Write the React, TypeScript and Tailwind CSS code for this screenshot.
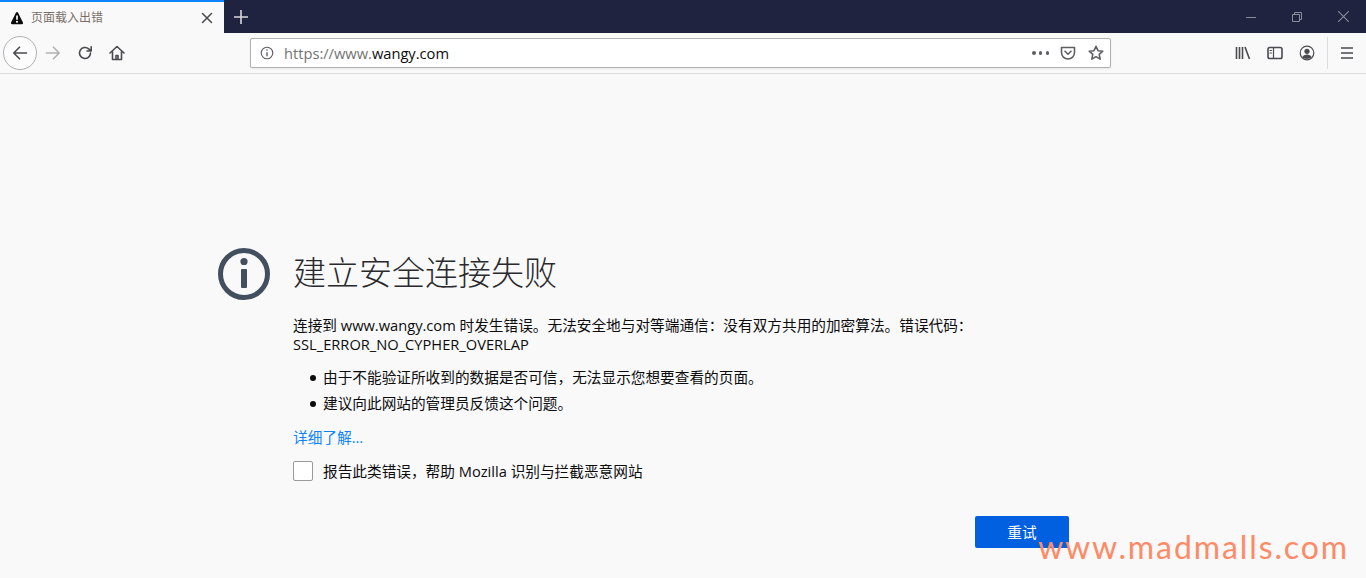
import React from "react";

const cjk = { fontFamily: '"Open Sans", "Noto Sans CJK SC", sans-serif' };

function Icon({ children, className = "" }: { children: React.ReactNode; className?: string }) {
  return (
    <svg viewBox="0 0 16 16" className={className} fill="none" stroke="currentColor" strokeWidth="1.6" strokeLinecap="round" strokeLinejoin="round">
      {children}
    </svg>
  );
}

function TabBar() {
  return (
    <div className="flex h-[33px] bg-[#202340]">
      <div className="flex h-[33px] w-[224px] items-center border-t-2 border-[#0a84ff] bg-[#f9f9fa] pl-[10px] pr-[10px]">
        <svg viewBox="0 0 16 16" className="h-[14px] w-[14px] text-[#0c0c0d]" fill="currentColor">
          <path d="M8 1c-.5 0-.9.3-1.1.7L1.2 13c-.5 1 .2 2 1.2 2h11.2c1 0 1.7-1 1.2-2L9.1 1.7C8.9 1.3 8.5 1 8 1zM7 5h2v5H7V5zm1 6.2a1.2 1.2 0 110 2.4 1.2 1.2 0 010-2.4z" fillRule="evenodd" />
        </svg>
        <span className="ml-[7px] flex-1 text-[12px] text-[#7a6f68]">页面载入出错</span>
        <svg viewBox="0 0 12 12" className="mr-[1px] h-[12px] w-[12px] text-[#4a4a4f]" stroke="currentColor" strokeWidth="1.5" strokeLinecap="round">
          <path d="M1.5 1.5l9 9M10.5 1.5l-9 9" />
        </svg>
      </div>
      <div className="flex w-[34px] items-center justify-center text-[#d7d7db]">
        <svg viewBox="0 0 14 14" className="h-[14px] w-[14px]" stroke="currentColor" strokeWidth="1.6">
          <path d="M7 0v14M0 7h14" />
        </svg>
      </div>
      <div className="flex-1" />
      <div className="flex items-center text-[#8a8c9c]">
        <div className="flex w-[46px] justify-center">
          <svg viewBox="0 0 10 10" className="h-[10px] w-[10px]" stroke="currentColor" strokeWidth="1"><path d="M0 5.5h10" /></svg>
        </div>
        <div className="flex w-[46px] justify-center">
          <svg viewBox="0 0 10 10" className="h-[10px] w-[10px]" fill="none" stroke="currentColor" strokeWidth="1"><path d="M.5 2.5h7v7h-7zM2.5 2.5V.5h7v7h-2" /></svg>
        </div>
        <div className="flex w-[46px] justify-center">
          <svg viewBox="0 0 10 10" className="h-[11px] w-[11px]" stroke="currentColor" strokeWidth="1"><path d="M0 0l10 10M10 0L0 10" /></svg>
        </div>
      </div>
    </div>
  );
}

function Toolbar() {
  return (
    <div className="flex h-[41px] items-center border-b border-[#dcdcde] bg-[#f9f9fa] text-[#4a4a4f]">
      <div className="ml-[3px] flex h-[34px] w-[34px] items-center justify-center rounded-full border border-[#b1b1b3] bg-[#fcfcfc]">
        <Icon className="h-[16px] w-[16px]"><path d="M14.5 8H2M7.5 2.2L1.8 8l5.7 5.8" /></Icon>
      </div>
      <div className="ml-[8px] flex w-[16px] justify-center text-[#b1b1b3]">
        <Icon className="h-[16px] w-[16px]"><path d="M1.5 8H14M8.5 2.2L14.2 8l-5.7 5.8" /></Icon>
      </div>
      <div className="ml-[16px] flex w-[16px] justify-center">
        <Icon className="h-[16px] w-[16px]"><path d="M13.5 8a5.5 5.5 0 11-1.8-4.1L14 6M14.2 1.8V6H10" /></Icon>
      </div>
      <div className="ml-[16px] flex w-[16px] justify-center">
        <Icon className="h-[16px] w-[16px]"><path d="M1 8l7-6.5L15 8M3.5 6.5V14.5h9V6.5M7 14.5v-4h2v4" /></Icon>
      </div>
      <div className="ml-[125px] flex h-[30px] w-[861px] items-center rounded-[2px] border border-[#b1b1b3] bg-white pl-[9px] pr-[6px] shadow-[0_1px_2px_rgba(0,0,0,0.08)]">
        <svg viewBox="0 0 16 16" className="h-[14px] w-[14px] text-[#5f5f63]" fill="none" stroke="currentColor" strokeWidth="1.3">
          <circle cx="8" cy="8" r="6.6" />
          <path d="M8 7v4.6" strokeWidth="1.6" />
          <circle cx="8" cy="4.7" r="0.9" fill="currentColor" stroke="none" />
        </svg>
        <div className="ml-[10px] flex-1 text-[14.67px] leading-none" style={{ fontFamily: '"Open Sans", sans-serif' }}>
          <span className="text-[#737373]">https://www.</span><span className="text-[#0c0c0d]">wangy.com</span>
        </div>
        <div className="flex w-[17px] justify-between">
          <span className="h-[3.5px] w-[3.5px] rounded-full bg-[#5f5f63]" />
          <span className="h-[3.5px] w-[3.5px] rounded-full bg-[#5f5f63]" />
          <span className="h-[3.5px] w-[3.5px] rounded-full bg-[#5f5f63]" />
        </div>
        <Icon className="ml-[11px] h-[16px] w-[16px] text-[#5f5f63]"><path d="M1.5 2.5h13v5a6.5 6.5 0 01-13 0zM5 6.2l3 3 3-3" /></Icon>
        <Icon className="ml-[12px] h-[16px] w-[16px] text-[#5f5f63]"><path d="M8 1.3l2 4.4 4.8.5-3.6 3.2 1 4.7L8 11.6l-4.2 2.5 1-4.7L1.2 6.2 6 5.7z" /></Icon>
      </div>
      <div className="flex-1" />
      <svg viewBox="0 0 16 16" className="h-[16px] w-[16px]" fill="none" stroke="currentColor" strokeWidth="1.6">
        <path d="M1.5 2v12M4.5 2v12M7.5 2v12M10 2l4.5 12" />
      </svg>
      <Icon className="ml-[16px] h-[16px] w-[16px]"><rect x="1" y="2.5" width="14" height="11" rx="1.8" /><path d="M6.5 2.5v11M3 5.5h1.5M3 8h1.5" strokeWidth="1.2" /></Icon>
      <svg viewBox="0 0 16 16" className="ml-[16px] h-[16px] w-[16px]" fill="none" stroke="currentColor" strokeWidth="1.2">
        <circle cx="8" cy="8" r="6.8" />
        <circle cx="8" cy="6.3" r="2.6" fill="currentColor" stroke="none" />
        <path d="M3.2 12.3c1-2 2.8-2.8 4.8-2.8s3.8.8 4.8 2.8c-1.4 1.2-3 1.6-4.8 1.6s-3.4-.4-4.8-1.6z" fill="currentColor" stroke="none" />
      </svg>
      <div className="ml-[12px] h-[32px] w-px bg-[#dcdcde]" />
      <svg viewBox="0 0 14 14" className="ml-[12px] mr-[12px] h-[14px] w-[14px]" stroke="currentColor" strokeWidth="1.7">
        <path d="M1 2h12M1 7h12M1 12h12" />
      </svg>
    </div>
  );
}

export default function App() {
  return (
    <div className="relative h-[578px] overflow-hidden bg-[#f9f9fa] text-[#0c0c0d]" style={cjk}>
      <TabBar />
      <Toolbar />
      <main className="flex pl-[217px] pt-[173px]">
        <svg viewBox="0 0 54 54" className="h-[54px] w-[54px] shrink-0 text-[#424f5e]" fill="none">
          <circle cx="27" cy="27" r="23.5" stroke="currentColor" strokeWidth="5" />
          <circle cx="27" cy="14.5" r="3.6" fill="currentColor" />
          <rect x="24" y="22" width="6" height="19" rx="1" fill="currentColor" />
        </svg>
        <div className="ml-[22px] w-[776px]">
          <h1 className="mt-[2px] text-[33px] font-light leading-[44px] text-[#2a2a2e]" style={{ fontFamily: '"Noto Sans CJK SC", sans-serif', fontWeight: 300 }}>建立安全连接失败</h1>
          <p className="mt-[23px] w-[680px] text-[14.67px] leading-[19px]">
            连接到 www.wangy.com 时发生错误。无法安全地与对等端通信：没有双方共用的加密算法。错误代码：SSL_ERROR_NO_CYPHER_OVERLAP
          </p>
          <ul className="mt-[14px] flex flex-col gap-[7px] text-[14.67px] leading-[19px]">
            <li className="flex items-center">
              <span className="ml-[17px] h-[6px] w-[6px] rounded-full bg-[#0c0c0d]" />
              <span className="ml-[7px]">由于不能验证所收到的数据是否可信，无法显示您想要查看的页面。</span>
            </li>
            <li className="flex items-center">
              <span className="ml-[17px] h-[6px] w-[6px] rounded-full bg-[#0c0c0d]" />
              <span className="ml-[7px]">建议向此网站的管理员反馈这个问题。</span>
            </li>
          </ul>
          <a className="mt-[15px] block text-[14.67px] leading-[19px] text-[#0a84ff]">详细了解…</a>
          <label className="mt-[14px] flex items-center text-[14.67px] leading-[20px]">
            <span className="h-[20px] w-[20px] rounded-[2px] border border-[#9a9a9e] bg-white" />
            <span className="ml-[10px]">报告此类错误，帮助 Mozilla 识别与拦截恶意网站</span>
          </label>
          <div className="mt-[35px] flex justify-end pr-[0px]">
            <button className="h-[32px] w-[94px] rounded-[2px] bg-[#0060df] text-[14.67px] text-white">重试</button>
          </div>
        </div>
      </main>
      <div className="absolute bottom-[15px] right-[17px] text-[32px] leading-none tracking-[1.9px] text-[#ff8a65]" style={{ fontFamily: 'Lato, sans-serif' }}>www.madmalls.com</div>
    </div>
  );
}
